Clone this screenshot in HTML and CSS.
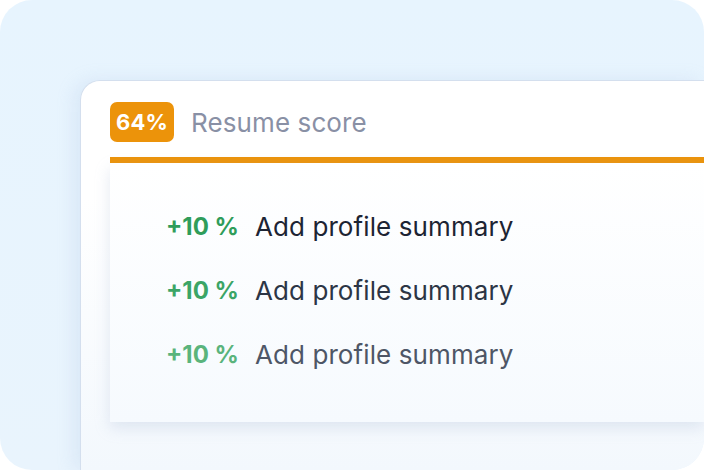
FILE: index.html
```html
<!DOCTYPE html>
<html lang="en">
<head>
<meta charset="utf-8">
<link rel="stylesheet" href="styles.css">
</head>
<body>
<div class="frame">
  <div class="card">
    <div class="header">
      <span class="badge">64%</span>
      <span class="title">Resume score</span>
    </div>
    <div class="bar"></div>
    <div class="panel">
      <div class="row r1"><span class="gain">+10 %</span><span class="label">Add profile summary</span></div>
      <div class="row r2"><span class="gain">+10 %</span><span class="label">Add profile summary</span></div>
      <div class="row r3"><span class="gain">+10 %</span><span class="label">Add profile summary</span></div>
    </div>
  </div>
</div>
</body>
</html>
```
FILE: styles.css
```css
* { box-sizing: border-box; }
html, body { margin: 0; padding: 0; background: #ffffff; }
body { font-family: Inter, "Noto Sans", sans-serif; }
.frame {
  width: 704px;
  height: 470px;
  border-radius: 32px;
  background: linear-gradient(180deg, #e7f4fe 0%, #e9f4fd 100%);
  overflow: hidden;
  padding: 80px 0 0 80px;
  display: flex;
}
.card {
  flex: 1;
  border-top: 1px solid #d4dfee;
  border-left: 1px solid #d4dfee;
  border-top-left-radius: 20px;
  background: linear-gradient(180deg, #ffffff 0%, #ffffff 30%, #f3f8fd 100%);
  box-shadow: -6px 0 18px rgba(150, 180, 215, 0.18);
  padding: 21px 0 0 29px;
  display: flex;
  flex-direction: column;
}
.header {
  display: flex;
  align-items: center;
  gap: 17px;
  height: 40px;
}
.badge {
  width: 64px;
  height: 40px;
  border-radius: 7px;
  background: #ec930a;
  color: #ffffff;
  font-weight: 700;
  font-size: 22px;
  display: flex;
  align-items: center;
  justify-content: center;
  letter-spacing: 0.2px;
}
.title {
  color: #8990a5;
  font-size: 26px;
  font-weight: 400;
  letter-spacing: 0.1px;
}
.bar {
  margin-top: 15px;
  height: 6px;
  background: #ec930a;
}
.panel {
  height: 259px;
  background: linear-gradient(180deg, #ffffff 0%, #f6fafe 100%);
  box-shadow: 0 6px 14px rgba(160, 180, 210, 0.28);
  padding: 31px 0 0 56px;
}
.row {
  display: flex;
  align-items: center;
  gap: 16px;
  height: 64px;
}
.gain { font-weight: 700; font-size: 24px; }
.label { font-size: 26px; letter-spacing: 0.1px; }
.r1 .gain { color: #2f9d5a; }
.r1 .label { color: #1d2433; }
.r2 .gain { color: #3ba566; }
.r2 .label { color: #2c3545; }
.r3 .gain { color: #5ab47c; }
.r3 .label { color: #4e5666; }
```
